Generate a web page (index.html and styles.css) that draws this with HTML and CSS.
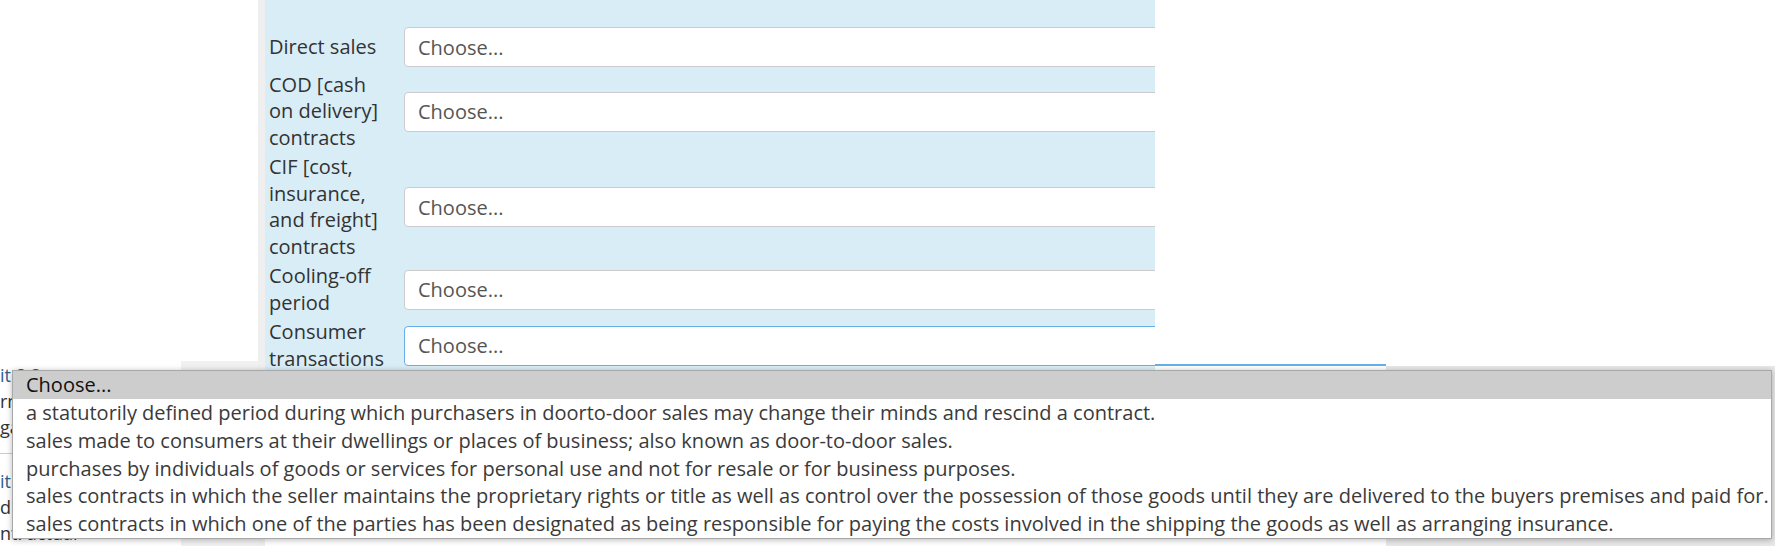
FILE: index.html
```html
<!DOCTYPE html>
<html lang="en">
<head>
  <meta charset="UTF-8" />
  <title>Matching question</title>
  <link rel="stylesheet" href="styles.css">
</head>
<body>
  <div class="page">
    <!-- left column of the page behind -->
    <div class="side">
      <div class="side-top"></div>
      <div class="side-bottom">
        <div class="side-text">
          <p class="link">it 8 8</p>
          <p>rm</p>
          <p>ga</p>
          <hr>
          <p class="link">it</p>
          <p>d -</p>
          <p>nt. actual</p>
        </div>
        <div class="side-shade"></div>
      </div>
    </div>

    <div class="gutter"></div>

    <!-- question -->
    <div class="formulation">
      <div class="match">
        <label for="s1">Direct sales</label>
        <select id="s1"><option>Choose...</option></select>

        <label for="s2">COD [cash on delivery] contracts</label>
        <select id="s2"><option>Choose...</option></select>

        <label for="s3">CIF [cost, insurance, and freight] contracts</label>
        <select id="s3"><option>Choose...</option></select>

        <label for="s4">Cooling-off period</label>
        <select id="s4"><option>Choose...</option></select>

        <label for="s5">Consumer transactions</label>
        <select id="s5" class="focused"><option>Choose...</option></select>
      </div>
    </div>

    <div class="aside">
      <div class="aside-top"></div>
      <div class="aside-bottom">
        <div class="tail"></div>
        <div class="shade"></div>
      </div>
    </div>

    <!-- open dropdown of the last select -->
    <ul class="dropdown">
      <li class="selected">Choose...</li>
      <li>a statutorily defined period during which purchasers in doorto-door sales may change their minds and rescind a contract.</li>
      <li>sales made to consumers at their dwellings or places of business; also known as door-to-door sales.</li>
      <li>purchases by individuals of goods or services for personal use and not for resale or for business purposes.</li>
      <li>sales contracts in which the seller maintains the proprietary rights or title as well as control over the possession of those goods until they are delivered to the buyers premises and paid for.</li>
      <li>sales contracts in which one of the parties has been designated as being responsible for paying the costs involved in the shipping the goods as well as arranging insurance.</li>
    </ul>
  </div>
</body>
</html>
```

FILE: styles.css
```css
body {
  margin: 0;
  background-color: #fff;
  font-family: "Open Sans", "Noto Sans", sans-serif;
  overflow: hidden;
}

.page {
  position: relative;
  display: flex;
  height: 546px;
  overflow: hidden;
}

/* left column */
.side {
  width: 258px;
  display: flex;
  flex-direction: column;
}

.side-top {
  height: 362px;
}

.side-bottom {
  flex: 1;
  display: flex;
}

.side-text {
  width: 181px;
  padding-top: 1px;
  font-size: 18px;
  color: #333;
  overflow: hidden;
}

.side-text p {
  margin: 0;
  line-height: 26px;
  white-space: nowrap;
}

.side-text .link {
  color: #2f5d8a;
}

.side-text hr {
  border: 0;
  border-top: 1px solid #ccc;
  margin: 13px 0 14px;
}

.side-shade {
  flex: 1;
  background-color: #f1f1f1;
}

.gutter {
  width: 7px;
  background-color: #efefef;
}

/* question panel */
.formulation {
  width: 886px;
  align-self: flex-start;
  padding: 25px 0 0 4px;
  background-color: #d9edf7;
  overflow: hidden;
}

.match {
  display: grid;
  grid-template-columns: 120px 982px;
  column-gap: 15px;
  row-gap: 2.7px;
  align-items: center;
}

.match label {
  font-size: 20px;
  line-height: 26.6px;
  color: #333;
}

.match select {
  -webkit-appearance: none;
  appearance: none;
  box-sizing: border-box;
  width: 982px;
  height: 40px;
  margin: 2px 0;
  padding: 0 13px;
  border: 1px solid #ccc;
  border-radius: 4px;
  background-color: #fff;
  font-family: "Open Sans", "Noto Sans", sans-serif;
  font-size: 20px;
  color: #555;
}

.match select.focused {
  border-color: #66afe9;
}

/* right side */
.aside {
  flex: 1;
  display: flex;
  flex-direction: column;
}

.aside-top {
  height: 364px;
}

.aside-bottom {
  flex: 1;
  display: flex;
}

.tail {
  width: 231px;
  border-top: 2px solid #66afe9;
}

.shade {
  flex: 1;
  margin-top: 2px;
  background-color: #e8e8e8;
}

/* dropdown list */
.dropdown {
  position: absolute;
  left: 12px;
  top: 370px;
  width: 1758px;
  margin: 0;
  padding: 0;
  list-style: none;
  background-color: #fff;
  border: 1px solid #a8a8a8;
  box-shadow: 0 1px 6px rgba(0, 0, 0, 0.28);
  font-size: 20px;
  color: #3a3a3a;
}

.dropdown li {
  padding-left: 13px;
  line-height: 27.75px;
  white-space: nowrap;
}

.dropdown li.selected {
  line-height: 28px;
  background-color: #cdcdcd;
  color: #111;
}
```
